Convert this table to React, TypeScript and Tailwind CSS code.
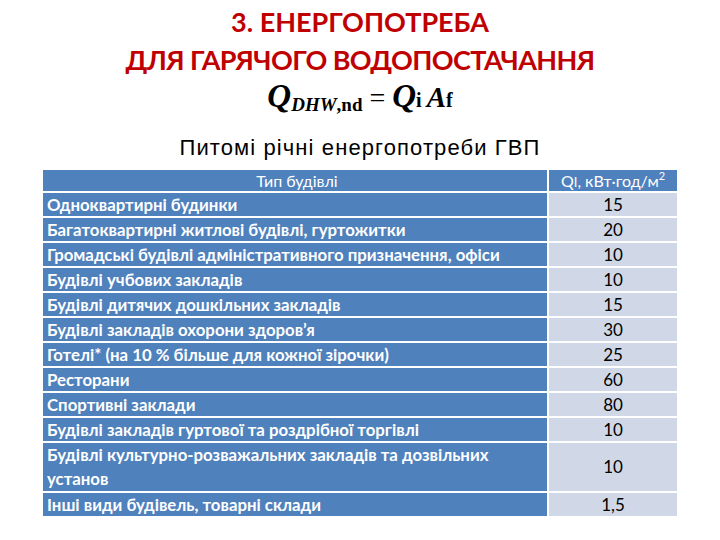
import React from "react";

const rows: { name: string; value: string; tall?: boolean }[] = [
  { name: "Одноквартирні будинки", value: "15" },
  { name: "Багатоквартирні житлові будівлі, гуртожитки", value: "20" },
  { name: "Громадські будівлі адміністративного призначення, офіси", value: "10" },
  { name: "Будівлі учбових закладів", value: "10" },
  { name: "Будівлі дитячих дошкільних закладів", value: "15" },
  { name: "Будівлі закладів охорони здоров’я", value: "30" },
  { name: "Готелі* (на 10 % більше для кожної зірочки)", value: "25" },
  { name: "Ресторани", value: "60" },
  { name: "Спортивні заклади", value: "80" },
  { name: "Будівлі закладів гуртової та роздрібної торгівлі", value: "10" },
  { name: "Будівлі культурно-розважальних закладів та дозвільних установ", value: "10", tall: true },
  { name: "Інші види будівель, товарні склади", value: "1,5" },
];

export default function App() {
  return (
    <div className="w-[720px] h-[540px] bg-white overflow-hidden relative">
      {/* Title */}
      <div className="pt-[3px] text-center text-[#c00000] font-bold text-[27px] leading-[38px] tracking-[-0.6px] font-['Lato','Liberation_Sans',sans-serif]">
        <div className="tracking-[0px]">3. ЕНЕРГОПОТРЕБА</div>
        <div>ДЛЯ ГАРЯЧОГО ВОДОПОСТАЧАННЯ</div>
      </div>

      {/* Formula */}
      <div className="-mt-[4px] flex justify-center items-baseline text-black font-['Liberation_Serif',serif] leading-[42px]">
        <span className="italic font-bold text-[33px]">Q</span>
        <span className="italic font-bold text-[19px] translate-y-[4px]">DHW</span>
        <span className="font-bold text-[19px] translate-y-[4px]">,nd</span>
        <span className="text-[28px] mx-[7px]">=</span>
        <span className="italic font-bold text-[33px]">Q</span>
        <span className="font-bold text-[20px] mr-[5px]">i</span>
        <span className="italic font-bold text-[29px]">A</span>
        <span className="font-bold text-[20px]">f</span>
      </div>

      {/* Subtitle */}
      <div className="mt-[13px] text-center text-[22px] leading-[26px] tracking-[1.1px] text-black font-['Liberation_Sans',Arial,sans-serif]">
        Питомі річні енергопотреби ГВП
      </div>

      {/* Table */}
      <div className="mt-[9px] ml-[43px] grid grid-cols-[504px_128px] gap-[2px] font-['Lato','Open_Sans',sans-serif]">
        <div className="bg-[#4f81bd] h-[21px] flex items-center justify-center text-white text-[16px] pl-[4px]">
          Тип будівлі
        </div>
        <div className="bg-[#4f81bd] h-[21px] flex items-center justify-center text-white text-[16px] whitespace-nowrap">
          Q<span className="text-[13px] mt-[4px]">I</span>, кВт·год/м<sup className="text-[11px] -top-[5px]">2</sup>
        </div>
        {rows.map((r) => (
          <React.Fragment key={r.name}>
            <div
              className={`bg-[#4f81bd] text-white font-bold text-[16.8px] leading-[24px] pl-[4px] pr-[10px] flex items-center whitespace-pre-line ${
                r.tall ? "h-[48px]" : "h-[23px]"
              }`}
            >
              {r.tall ? "Будівлі культурно-розважальних закладів та дозвільних\nустанов" : r.name}
            </div>
            <div
              className={`bg-[#d0d8e8] text-black text-[17px] flex items-center justify-center ${
                r.tall ? "h-[48px]" : "h-[23px]"
              }`}
            >
              {r.value}
            </div>
          </React.Fragment>
        ))}
      </div>
    </div>
  );
}
